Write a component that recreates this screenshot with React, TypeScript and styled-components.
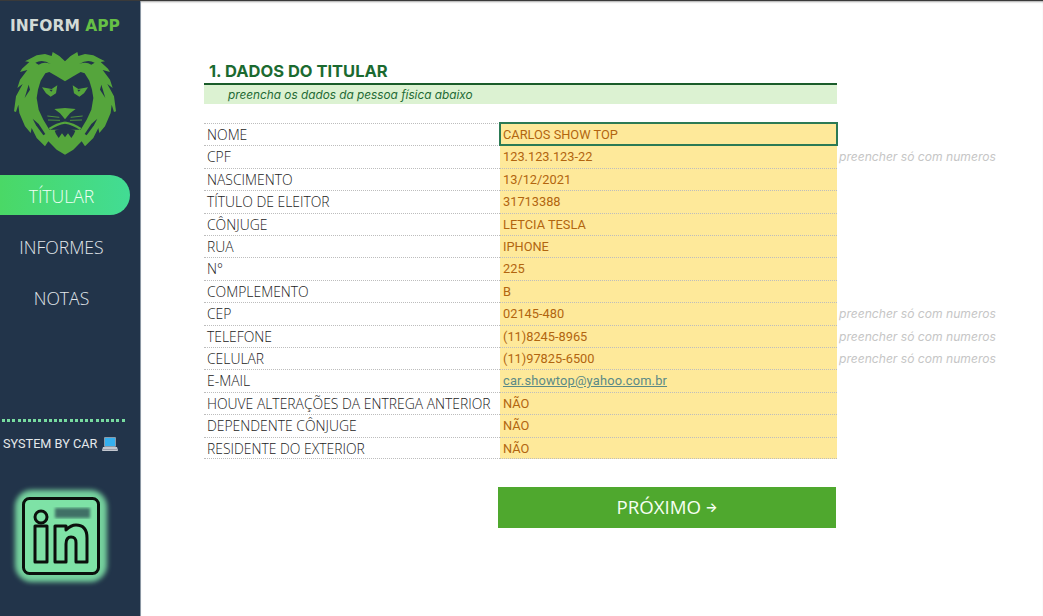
import styled, { createGlobalStyle } from 'styled-components';

const GlobalStyle = createGlobalStyle`
    html, body {
        margin: 0;
        padding: 0;
        background: #fff;
    }
`;

const Page = styled.div`
    display: flex;
    width: 1043px;
    height: 616px;
    overflow: hidden;
    border-top: 1px solid #3a3a3a;
    box-sizing: border-box;
`;

const Sidebar = styled.aside`
    width: 141px;
    flex-shrink: 0;
    box-sizing: border-box;
    background: #22344a;
    border-right: 1px solid #8a96a3;
    display: flex;
    flex-direction: column;
`;

const Brand = styled.div`
    margin: 17px 0 0 10px;
    font-family: 'DejaVu Sans', sans-serif;
    font-weight: 700;
    font-size: 15.5px;
    line-height: 17px;
    color: #d3dbd6;
    white-space: nowrap;
    span {
        color: #66bf46;
    }
`;

const LionBox = styled.div`
    margin: 13px 0 0 10px;
    height: 110px;
    svg {
        display: block;
    }
`;

const Nav = styled.nav`
    margin-top: 17px;
    display: flex;
    flex-direction: column;
    gap: 11px;
`;

const NavItem = styled.div<{ $active?: boolean }>`
    width: 130px;
    height: 40px;
    box-sizing: border-box;
    padding: 1px 7px 0 0;
    border-radius: 0 20px 20px 0;
    display: flex;
    align-items: center;
    justify-content: center;
    font-family: 'Open Sans', sans-serif;
    font-weight: 300;
    font-size: 17.6px;
    line-height: 24px;
    color: ${(p) => (p.$active ? '#f2fff6' : '#e3e8ec')};
    background: ${(p) => (p.$active ? 'linear-gradient(90deg, #4ad866, #42dc94)' : 'transparent')};
`;

const DottedLine = styled.div`
    margin: 102px 0 0 2px;
    width: 125px;
    height: 3px;
    background: repeating-linear-gradient(90deg, #78dca0 0 3px, transparent 3px 5.2px);
`;

const Credit = styled.div`
    margin: 14px 0 0 3px;
    display: flex;
    align-items: center;
    gap: 5px;
    font-family: 'Roboto', sans-serif;
    font-size: 12.7px;
    line-height: 16px;
    color: #e4e8ea;
    white-space: nowrap;
`;

const LinkedinBox = styled.div`
    margin: 45px 0 0 22px;
    width: 78px;
    height: 78px;
    border-radius: 10px;
    background: #7ee2a6;
    box-shadow: 0 0 5px 7px rgba(126, 226, 166, 0.9);
    svg {
        display: block;
    }
`;

const Main = styled.main`
    flex: 1;
    padding: 59px 0 0 63px;
    box-shadow: inset 0 2px 2px -1px rgba(0, 0, 0, 0.35);
`;

const Title = styled.h1`
    margin: 0;
    width: 633px;
    box-sizing: border-box;
    padding: 0 0 2px 5px;
    height: 25px;
    border-bottom: 2px solid #1a5c2a;
    font-family: 'Inter', sans-serif;
    font-weight: 700;
    font-size: 16.5px;
    line-height: 23px;
    color: #1b6a30;
`;

const Subtitle = styled.div`
    width: 633px;
    height: 19px;
    box-sizing: border-box;
    padding-left: 24px;
    background: #dcf2d2;
    font-family: 'Inter', sans-serif;
    font-style: italic;
    font-size: 11.8px;
    line-height: 20px;
    color: #1f6a35;
`;

const Table = styled.div`
    margin-top: 19px;
    display: grid;
    grid-template-columns: 296px 337px auto;
    grid-auto-rows: 22.42px;
`;

const LabelCell = styled.div`
    box-sizing: border-box;
    padding-left: 3px;
    border-top: 1px dotted #bdbdbd;
    font-family: 'Open Sans', sans-serif;
    font-weight: 300;
    font-size: 13.9px;
    line-height: 21px;
    color: #222;
    white-space: nowrap;
    &.last {
        border-bottom: 1px dotted #bdbdbd;
    }
`;

const ValueCell = styled.div<{ $selected?: boolean }>`
    position: relative;
    box-sizing: border-box;
    padding-left: 3px;
    background: #fee99a;
    border-top: 1px dotted #bdbdbd;
    font-family: 'Roboto', sans-serif;
    font-size: 12.8px;
    line-height: 22px;
    color: #b2650f;
    white-space: nowrap;
    &.last {
        border-bottom: 1px dotted #bdbdbd;
    }
    ${(p) => p.$selected && 'outline: 2px solid #2c7a55; outline-offset: -1px; z-index: 1;'}
`;

const MailLink = styled.a`
    color: #5b8a86;
    text-decoration: underline;
    letter-spacing: 0.2px;
`;

const Hint = styled.div`
    padding-left: 2px;
    font-family: 'Inter', sans-serif;
    font-style: italic;
    font-size: 12.1px;
    line-height: 23px;
    color: #c6c6c6;
    white-space: nowrap;
`;

const NextButton = styled.button`
    display: flex;
    align-items: center;
    justify-content: center;
    gap: 4px;
    margin: 28px 0 0 294px;
    padding: 0 0 2px;
    width: 338px;
    height: 41px;
    border: none;
    background: #4fa82e;
    font-family: 'Open Sans', sans-serif;
    font-weight: 400;
    font-size: 18.7px;
    color: #f6fff2;
`;

const ButtonArrow = styled.span`
    font-family: 'Inter', sans-serif;
    font-weight: 600;
    font-size: 13px;
`;

const rows = [
    { label: 'NOME', value: 'CARLOS SHOW TOP' },
    { label: 'CPF', value: '123.123.123-22', hint: true },
    { label: 'NASCIMENTO', value: '13/12/2021' },
    { label: 'TÍTULO DE ELEITOR', value: '31713388' },
    { label: 'CÔNJUGE', value: 'LETCIA TESLA' },
    { label: 'RUA', value: 'IPHONE' },
    { label: 'N°', value: '225' },
    { label: 'COMPLEMENTO', value: 'B' },
    { label: 'CEP', value: '02145-480', hint: true },
    { label: 'TELEFONE', value: '(11)8245-8965', hint: true },
    { label: 'CELULAR', value: '(11)97825-6500', hint: true },
    { label: 'E-MAIL', value: 'car.showtop@yahoo.com.br', mail: true },
    { label: 'HOUVE ALTERAÇÕES DA ENTREGA ANTERIOR', value: 'NÃO' },
    { label: 'DEPENDENTE CÔNJUGE', value: 'NÃO' },
    { label: 'RESIDENTE DO EXTERIOR', value: 'NÃO' },
];

const GREEN = '#55a53c';
const DARK = '#22344a';

const maneHalf =
    'M165 40 L148 24 L128 12 L125 24 L105 18 L80 22 L60 32 L45 40 L58 42 L36 62 L30 72 L52 66 L30 95 L22 120 L38 108 L18 145 L12 190 L18 192 L25 170 L28 195 L45 235 L62 255 L65 240 L80 270 L105 295 L115 280 L140 305 L165 320 Z';
const faceHalf =
    'M165 100 L140 85 L118 72 L106 76 L92 98 L84 125 L80 150 L86 185 L100 215 L118 245 L165 245 Z';

const LionLogo = () => (
    <svg width="110" height="110" viewBox="0 0 330 330">
        {[false, true].map((flip) => (
            <g key={String(flip)} transform={flip ? 'translate(330 0) scale(-1 1)' : undefined}>
                <path d={maneHalf} fill={GREEN} />
                <path d={faceHalf} fill={DARK} />
                <path d="M76 44 Q98 33 122 48 Q102 40 86 50 Z" fill={DARK} />
                <path d="M56 110 L44 150 L60 125 Z" fill={DARK} />
                <path d="M68 212 L78 232 L100 262 L106 258 L86 228 Z" fill={DARK} />
                <path d="M96 118 L125 123 L142 112 L138 136 L122 146 L108 136 Z" fill={GREEN} />
                <path d="M118 125 L128 125 L124 131 Z" fill={DARK} />
                <path d="M133 183 L165 180 L165 214 L150 196 Z" fill={GREEN} />
                <path
                    d="M112 204 L148 208 M114 216 L150 217"
                    stroke={GREEN}
                    strokeWidth="2.5"
                    fill="none"
                />
                <path d="M118 243 Q140 228 165 224" stroke={GREEN} strokeWidth="7" fill="none" />
                <path d="M134 248 L165 238 L165 268 L156 256 L146 270 L138 258 Z" fill={DARK} />
            </g>
        ))}
    </svg>
);

const LaptopIcon = () => (
    <svg width="16" height="16" viewBox="0 0 16 16">
        <rect x="2" y="1" width="12" height="10" rx="1" fill="#8a9aa8" />
        <rect x="3" y="2" width="10" height="8" fill="#35b0ee" />
        <path d="M1 11h14l1 3.2c0 .5-.4.8-.8.8H.8c-.4 0-.8-.3-.8-.8z" fill="#c3c7cf" />
        <rect x="1" y="13" width="14" height="1" fill="#9a9ea8" />
    </svg>
);

const LinkedinIcon = () => (
    <svg width="78" height="78" viewBox="0 0 78 78" fill="none">
        <defs>
            <filter id="bar-blur">
                <feGaussianBlur stdDeviation="1.4" />
            </filter>
        </defs>
        <rect x="33" y="11" width="35" height="10" fill="#3f6f66" filter="url(#bar-blur)" />
        <rect x="1.5" y="1.5" width="75" height="75" rx="6" stroke="#0b0f0c" strokeWidth="3" />
        <circle cx="19" cy="20" r="6" stroke="#0b0f0c" strokeWidth="3" />
        <path d="M13 29h12v36H13z" stroke="#0b0f0c" strokeWidth="3" strokeLinejoin="round" />
        <path
            d="M33 29h11v4c3-3 6-5 10-5 8 0 11 5 11 13v24H54V46c0-4-1-6-5-6s-5 3-5 7v18H33z"
            stroke="#0b0f0c"
            strokeWidth="3"
            strokeLinejoin="round"
        />
    </svg>
);

const App = () => {
    return (
        <Page>
            <GlobalStyle />
            <Sidebar>
                <Brand>
                    INFORM <span>APP</span>
                </Brand>
                <LionBox>
                    <LionLogo />
                </LionBox>
                <Nav>
                    <NavItem $active>TÍTULAR</NavItem>
                    <NavItem>INFORMES</NavItem>
                    <NavItem>NOTAS</NavItem>
                </Nav>
                <DottedLine />
                <Credit>
                    SYSTEM BY CAR <LaptopIcon />
                </Credit>
                <LinkedinBox>
                    <LinkedinIcon />
                </LinkedinBox>
            </Sidebar>
            <Main>
                <Title>1. DADOS DO TITULAR</Title>
                <Subtitle>preencha os dados da pessoa física abaixo</Subtitle>
                <Table>
                    {rows.map((row, i) => {
                        const last = i === rows.length - 1 ? 'last' : undefined;
                        return (
                            <div key={row.label} style={{ display: 'contents' }}>
                                <LabelCell className={last}>{row.label}</LabelCell>
                                <ValueCell className={last} $selected={i === 0}>
                                    {row.mail ? <MailLink>{row.value}</MailLink> : row.value}
                                </ValueCell>
                                <Hint>{row.hint ? 'preencher só com numeros' : ''}</Hint>
                            </div>
                        );
                    })}
                </Table>
                <NextButton>
                    PRÓXIMO <ButtonArrow>→</ButtonArrow>
                </NextButton>
            </Main>
        </Page>
    );
};

export default App;
